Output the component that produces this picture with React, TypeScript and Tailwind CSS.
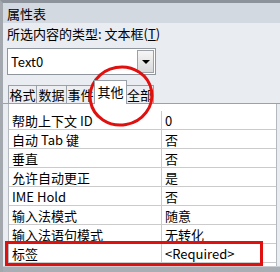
const rows: [string, string][] = [
  ["帮助上下文 ID", "0"],
  ["自动 Tab 键", "否"],
  ["垂直", "否"],
  ["允许自动更正", "是"],
  ["IME Hold", "否"],
  ["输入法模式", "随意"],
  ["输入法语句模式", "无转化"],
  ["标签", "<Required>"],
];

const tabs = [
  { label: "格式", w: "w-[29px]" },
  { label: "数据", w: "w-[31px]" },
  { label: "事件", w: "w-[29px]" },
  { label: "其他", w: "w-[33px]", active: true },
  { label: "全部", w: "w-[28px]" },
];

const font = { fontFamily: '"Noto Sans CJK SC", "Liberation Sans", sans-serif' };

export default function App() {
  return (
    <div
      className="relative w-[280px] h-[272px] overflow-hidden flex flex-col bg-[#e9ecf0] border-t-[3px] border-l-[3px] border-t-[#8d939b] border-l-[#a3a8ae] text-[13px] text-black"
      style={font}
    >
      <div className="h-[20px] shrink-0 bg-[#d3d9e0] pl-[4px] flex items-center leading-none">属性表</div>

      <div className="h-[21px] shrink-0 pl-[4px] flex items-center leading-none">
        所选内容的类型: 文本框(<span className="underline">T</span>)
      </div>

      <div className="mt-[4px] ml-[4px] w-[149px] h-[27px] shrink-0 bg-white border border-[#8f959c] flex items-center">
        <span className="pl-[3px] flex-1 leading-none">Text0</span>
        <div className="w-[17px] h-[23px] mr-px border border-[#9da1a6] bg-gradient-to-b from-[#f6f6f6] to-[#d8d9da] flex items-center justify-center">
          <div className="w-0 h-0 border-l-[4px] border-r-[4px] border-t-[4px] border-l-transparent border-r-transparent border-t-black" />
        </div>
      </div>

      <div className="mt-[5px] h-[24px] shrink-0 flex items-end pl-[5px] border-b border-[#9ba1a8]">
        {tabs.map((t) => (
          <div
            key={t.label}
            className={`${t.w} -ml-px first:ml-0 flex items-center justify-center leading-none border border-b-0 border-[#9ba1a8] ${
              t.active ? "h-[24px] bg-white relative z-10 -mb-px pb-[3px]" : "h-[18px] bg-[#eceef1]"
            }`}
          >
            {t.label}
          </div>
        ))}
      </div>

      <div className="flex-1 ml-[5px] mr-[3px] bg-white border-l border-r border-[#b4b9bf] pt-[7px]">
        {rows.map(([k, v]) => (
          <div key={k} className="h-[19px] flex border-b border-[#cbcbcb]">
            <div className="w-[153px] shrink-0 pl-[3px] flex items-center leading-none border-r border-[#cbcbcb]">{k}</div>
            <div className="flex-1 pl-[3px] flex items-center leading-none">{v}</div>
          </div>
        ))}
      </div>

      <div className="h-[6px] shrink-0 bg-[#a9aeb4] border-t border-[#c9cdd2]" />

      <svg className="absolute left-[82px] top-[59px] pointer-events-none" width="72" height="68" viewBox="0 0 72 68">
        <ellipse cx="36" cy="34" rx="31" ry="29" fill="none" stroke="#e0100f" strokeWidth="3" transform="rotate(-10 36 34)" />
      </svg>

      <div className="absolute left-[2px] top-[238px] w-[258px] h-[25px] border-[3px] border-[#e0100f] pointer-events-none" />
    </div>
  );
}
